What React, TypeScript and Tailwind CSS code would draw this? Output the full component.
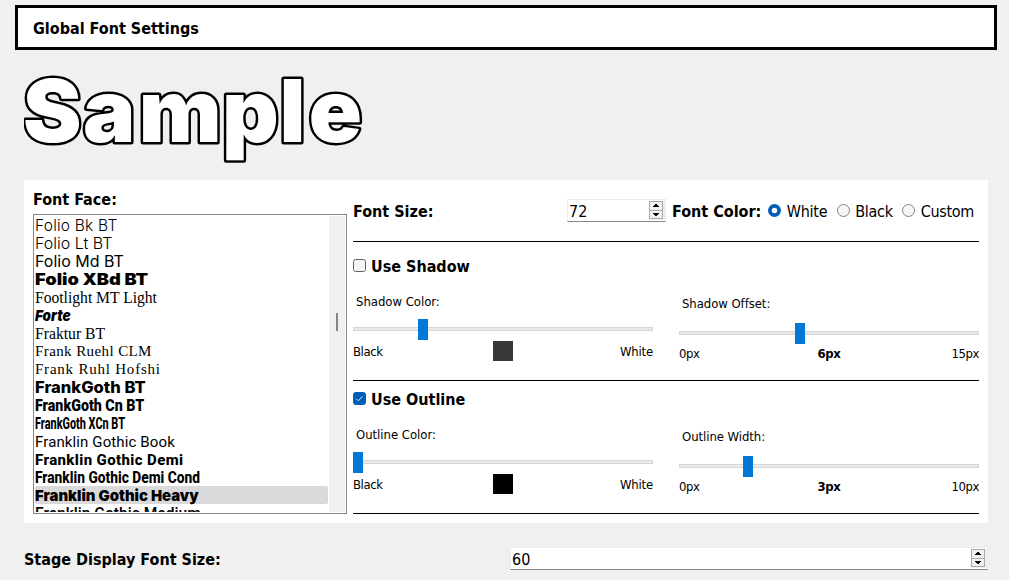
import React from "react";

const SANS = "font-['DejaVu_Sans_Condensed','DejaVu_Sans',sans-serif]";

const FONTS: { name: string; cls: string }[] = [
  { name: "Folio Bk BT", cls: "font-['Inter',sans-serif] font-[350] text-[15.5px] tracking-[0.22px]" },
  { name: "Folio Lt BT", cls: "font-['Inter',sans-serif] font-light text-base" },
  { name: "Folio Md BT", cls: "font-['Inter',sans-serif] font-normal text-base" },
  { name: "Folio XBd BT", cls: "font-['Inter',sans-serif] font-black text-base scale-x-[1.14]" },
  { name: "Footlight MT Light", cls: "font-['Liberation_Serif',serif] text-base scale-x-[0.975]" },
  { name: "Forte", cls: "font-['Inter',sans-serif] font-black italic text-[15px] scale-x-[0.9]" },
  { name: "Fraktur BT", cls: "font-['Liberation_Serif',serif] text-base scale-x-[0.98]" },
  { name: "Frank Ruehl CLM", cls: "font-['Liberation_Serif',serif] text-[15px] tracking-[0.4px]" },
  { name: "Frank Ruhl Hofshi", cls: "font-['Liberation_Serif',serif] text-[15px] tracking-[0.78px]" },
  { name: "FrankGoth BT", cls: "font-['Inter',sans-serif] font-extrabold text-base scale-x-[1.035]" },
  { name: "FrankGoth Cn BT", cls: "font-['Roboto',sans-serif] font-black text-base scale-x-[0.89]" },
  { name: "FrankGoth XCn BT", cls: "font-['Roboto',sans-serif] font-extrabold text-base scale-x-[0.68]" },
  { name: "Franklin Gothic Book", cls: "font-['Roboto',sans-serif] font-normal text-[15px] tracking-[0.12px] pt-px" },
  { name: "Franklin Gothic Demi", cls: "font-['Roboto',sans-serif] font-extrabold text-[15px] tracking-[0.38px] pt-px" },
  { name: "Franklin Gothic Demi Cond", cls: "font-['Roboto',sans-serif] font-extrabold text-base scale-x-[0.86]" },
  { name: "Franklin Gothic Heavy", cls: "font-['Inter',sans-serif] font-black text-[15px] scale-x-[0.99]" },
  { name: "Franklin Gothic Medium", cls: "font-['Roboto',sans-serif] font-medium text-base scale-x-[0.975]" },
];

function SpinBox({ value, className }: { value: string; className: string }) {
  return (
    <div className={`flex h-[23px] border border-[#ececec] border-b-[#868686] bg-white ${className}`}>
      <span className="flex-1 pl-px text-base leading-[23px]">{value}</span>
      <div className="mt-px h-[19px] w-4 bg-[#f0f0f0]">
        <svg className="block" width="15" height="19" viewBox="0 0 15 19" shapeRendering="crispEdges">
          <rect x="0.5" y="0.5" width="13" height="17" fill="#f0f0f0" stroke="#a9a9a9" />
          <path d="M1 9.5h12" stroke="#a9a9a9" />
          <path d="M6 3h2v1h1v1h1v1H4V5h1V4h1z M4 12h6v1H9v1H8v1H6v-1H5v-1H4z" fill="#000" />
        </svg>
      </div>
    </div>
  );
}

function Slider({ value }: { value: number }) {
  return (
    <div className="relative flex h-[21px] w-[300px] items-center">
      <div className="mt-[-1px] h-1 w-full border border-[#d6d6d6] bg-[#e7eaea]" />
      <div className="absolute top-0 h-[21px] w-2.5 bg-[#0078d7]" style={{ left: value }} />
    </div>
  );
}

function Checkbox({ checked, label }: { checked: boolean; label: string }) {
  return (
    <div className="flex h-[13px] items-start">
      <svg className="block" width="13" height="13" viewBox="0 0 13 13">
        <rect x="0.5" y="0.5" width="12" height="12" rx="2.2" fill={checked ? "#005fb8" : "#f5f5f5"} stroke={checked ? "#005fb8" : "#626262"} />
        {checked && <path d="M3.3 6.8l2 2 4.2-4.4" fill="none" stroke="#d8e6f4" strokeWidth="1" />}
      </svg>
      <span className="-mt-0.5 ml-[5px] text-base leading-5 font-bold">{label}</span>
    </div>
  );
}

function Radio({ checked, label }: { checked?: boolean; label: string }) {
  return (
    <div className="flex items-start">
      <svg className="mt-[3px] block" width="13" height="13" viewBox="0 0 13 13">
        {checked ? (
          <circle cx="6.5" cy="6.5" r="4.6" fill="#fff" stroke="#005fb8" strokeWidth="3.8" />
        ) : (
          <circle cx="6.5" cy="6.5" r="6" fill="#f5f5f5" stroke="#808080" />
        )}
      </svg>
      <span className="mt-px ml-[5.5px] -mr-[0.5px] text-base leading-5 tracking-[-0.3px]">{label}</span>
    </div>
  );
}

type GroupProps = {
  title: string;
  checked: boolean;
  colorLabel: string;
  colorValue: number;
  swatch: string;
  sizeLabel: string;
  sizeValue: number;
  current: string;
  max: string;
  className: string;
};

function Group(p: GroupProps) {
  return (
    <section className={`border-b border-black ${p.className}`}>
      <Checkbox checked={p.checked} label={p.title} />
      <div className="flex justify-between text-[13px] leading-5">
        <div className="w-[300px] pt-5">
          <div className="mb-[7px] h-5 pl-[3px] tracking-[-0.03px]">{p.colorLabel}</div>
          <Slider value={p.colorValue} />
          <div className="mt-px flex h-5">
            <span className="flex-1 pt-px tracking-[-0.4px]">Black</span>
            <div className={`size-5 ${p.swatch}`} />
            <span className="flex-1 pt-px text-right tracking-[-0.2px]">White</span>
          </div>
        </div>
        <div className="w-[300px] pt-[22px]">
          <div className="mb-[9px] h-5 pl-[3px] tracking-[-0.06px]">{p.sizeLabel}</div>
          <Slider value={p.sizeValue} />
          <div className="flex h-5">
            <span className="flex-1 tracking-[-0.4px]">0px</span>
            <span className="font-bold tracking-[-0.3px]">{p.current}</span>
            <span className="flex-1 text-right tracking-[-0.4px]">{p.max}</span>
          </div>
        </div>
      </div>
    </section>
  );
}

export default function App() {
  return (
    <div className={`h-[580px] w-[1009px] overflow-hidden bg-[#f0f0f0] pt-[5px] text-black ${SANS}`}>
      <header className="ml-[15px] flex h-[45px] w-[982px] items-center border-3 border-black bg-white pt-0.5 pl-[15px] text-base font-bold">
        Global Font Settings
      </header>

      <div className="ml-6 h-[130px] w-[400px] overflow-hidden">
        <svg width="400" height="130" viewBox="0 0 400 130" className="block">
          <text
            x="-1 58.5 113.5 196 253 282"
            y="92"
            transform="scale(1.01 1)"
            className="font-['Inter',sans-serif] text-[87px] font-black"
            fill="#fff"
            stroke="#000"
            strokeWidth="5"
            strokeLinejoin="round"
            paintOrder="stroke"
          >
            Sample
          </text>
        </svg>
      </div>

      <main className="ml-6 flex h-[343px] w-[964px] bg-white pt-[9px] pl-[9px]">
        <div className="w-[314px]">
          <div className="h-[25px] pt-px text-base leading-5 font-bold">Font Face:</div>
          <div className="flex h-[300px] border border-[#828790] p-px">
            <div className="flex-1 overflow-hidden">
              {FONTS.map((f) => (
                <div key={f.name} className={`flex h-[18px] w-[293px] rounded-[2px] ${f.name === "Franklin Gothic Heavy" ? "bg-[#d9d9d9]" : ""}`}>
                  <span className={`block w-max origin-left leading-[19px] whitespace-nowrap ${f.cls}`}>{f.name}</span>
                </div>
              ))}
            </div>
            <div className="flex w-4 justify-center bg-[#f0f0f0] pt-[97px]">
              <div className="h-[18px] w-0.5 bg-[#868686]" />
            </div>
          </div>
        </div>

        <div className="ml-1.5 w-[626px]">
          <div className="flex h-[53px] items-start border-b border-black">
            <span className="mt-[13px] w-[214px] text-base leading-5 font-bold">Font Size:</span>
            <SpinBox value="72" className="mt-[10px] w-[99px]" />
            <div className="mt-[13px] ml-1.5 flex text-base leading-5 font-bold">Font Color:</div>
            <div className="mt-3 ml-[7px] flex gap-[10px]">
              <Radio checked label="White" />
              <Radio label="Black" />
              <Radio label="Custom" />
            </div>
          </div>
          <Group
            className="h-[139px] pt-[17px]"
            title="Use Shadow"
            checked={false}
            colorLabel="Shadow Color:"
            colorValue={65}
            swatch="bg-[#393939]"
            sizeLabel="Shadow Offset:"
            sizeValue={116}
            current="6px"
            max="15px"
          />
          <Group
            className="h-[133px] pt-[11px]"
            title="Use Outline"
            checked
            colorLabel="Outline Color:"
            colorValue={0}
            swatch="bg-black"
            sizeLabel="Outline Width:"
            sizeValue={64}
            current="3px"
            max="10px"
          />
        </div>
      </main>

      <div className="mt-6 ml-6 flex">
        <span className="mt-[3px] w-[486px] text-base leading-5 font-bold">Stage Display Font Size:</span>
        <SpinBox value="60" className="w-[478px]" />
      </div>
    </div>
  );
}
